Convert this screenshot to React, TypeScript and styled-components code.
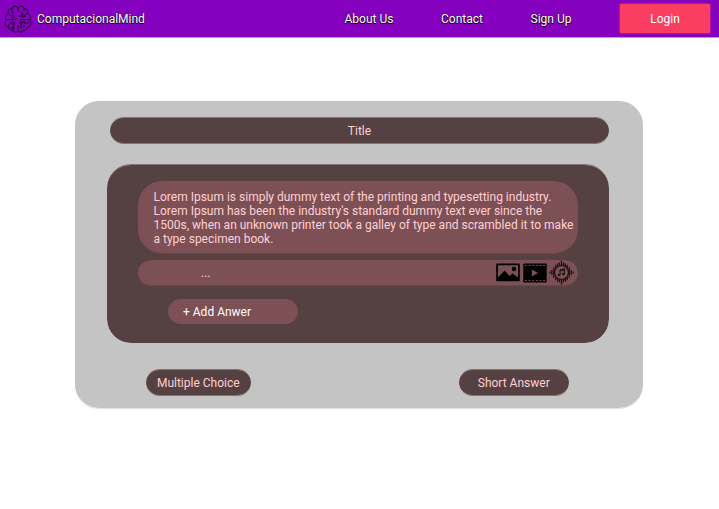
import React from "react";
import styled, { createGlobalStyle } from "styled-components";

const GlobalStyle = createGlobalStyle`
  * { box-sizing: border-box; }
  body {
    margin: 0;
    background: #ffffff;
    font-family: Roboto, "Liberation Sans", sans-serif;
    font-size: 12px;
    line-height: 14px;
    overflow: hidden;
  }
`;

const Header = styled.header`
  display: flex;
  align-items: center;
  height: 38px;
  padding: 0 9px 0 4px;
  border-bottom: 1px solid #c98fe2;
  background: #8500bf;
  color: #ffffff;
`;

const Brand = styled.a`
  display: flex;
  align-items: center;
  gap: 5px;
  width: 340.5px;
  text-shadow: 0 1px 1px #000, 0 0 1px #000;

  svg { width: 28px; height: 30px; }
`;

const Nav = styled.nav`
  display: flex;
  flex: 1;
`;

const NavLink = styled.a<{ $width: number }>`
  width: ${(p) => p.$width}px;
  white-space: nowrap;
  text-shadow: 0 1px 1px #000, 0 0 1px #000;
`;

const LoginButton = styled.button`
  width: 90px;
  height: 29px;
  padding: 0;
  border: 0;
  background: #f93e62;
  box-shadow: 0 0 2px #f93e62;
  color: #ffffff;
  font: inherit;
`;

const Card = styled.main`
  width: 568px;
  height: 308px;
  margin: 63px 0 0 75px;
  padding: 16px 34px 12px 32px;
  border-bottom: 1px solid #e1e1e1;
  border-radius: 24px;
  background: #c4c4c4;
  background-clip: padding-box;
`;

const TitleBar = styled.h1`
  height: 27px;
  margin: 0 0 20px 3px;
  border: solid #55404299;
  border-width: 1px 0;
  border-radius: 13.5px;
  background: #554042;
  background-clip: padding-box;
  color: #ffd0d5;
  font-size: 12px;
  font-weight: 400;
  line-height: 26px;
  text-align: center;
`;

const Panel = styled.section`
  height: 179px;
  padding: 16px 31px 19px 31px;
  border-top: 1px solid #55404299;
  border-radius: 24px;
  background: #554042;
  background-clip: padding-box;
`;

const Question = styled.p`
  height: 73px;
  margin: 0 0 6px;
  padding: 9px 0 0 15.5px;
  border-bottom: 1px solid #7c505480;
  border-radius: 24px;
  background: #7c5054;
  background-clip: padding-box;
  color: #ffd0d5;
  white-space: nowrap;
`;

const AnswerRow = styled.div`
  display: flex;
  align-items: center;
  justify-content: space-between;
  height: 26px;
  padding: 0 4px 0 63px;
  border-bottom: 1px solid #7c505480;
  border-radius: 13px;
  background: #7c5054;
  background-clip: padding-box;
  color: #ffd0d5;
`;

const MediaTools = styled.div`
  display: flex;
  align-items: center;

  svg { display: block; }
  svg:nth-child(2) { margin: 0 2px 0 3px; }
`;

const AddButton = styled.button`
  display: block;
  width: 130px;
  height: 25px;
  margin: 13px 0 0 30px;
  padding: 0 15px;
  border: 0;
  border-radius: 13px;
  background: #7c5054;
  color: #ffffff;
  font: inherit;
  text-align: left;
`;

const Choices = styled.footer`
  display: flex;
  justify-content: space-between;
  padding: 26px 40px 0 39px;
`;

const ChoiceButton = styled.button<{ $width: number }>`
  width: ${(p) => p.$width}px;
  height: 27px;
  padding: 0;
  border: solid #55404299;
  border-width: 1px 0;
  border-radius: 13.5px;
  background: #554042;
  background-clip: padding-box;
  color: #ffd0d5;
  font: inherit;
`;

const BrainIcon = () => (
  <svg viewBox="0 0 28 30" fill="none" stroke="#160020" strokeWidth="1">
    <path d="M14 4.500C13 1.500 8.500 1.500 8 4.500C5 4.500 3.500 7 4.500 9.500C1.500 11 .5 14 2.500 16C-.5 19 1.500 23 4.500 23C5 26 7.500 27 9 26.500C10.500 29 13.500 28.500 14 26" />
    <path d="M14 4.500C15 1.500 19.500 1.500 20 4.500C23 4.500 24.500 7 23.500 9.500C26.500 11 27.500 14 25.500 16C28.500 19 26.500 23 23.500 23C23 26 20.500 27 19 26.500C17.500 29 14.500 28.500 14 26V21M14 8V4.500" />
    <path d="M8 4.500V9M10 8.500l-2 1M4.500 9.500L6.500 12M2.500 15.500H11l2-1.500M10 18v4l-2 2M4.500 23v-2l2-2M17 20v5M20 4.500V7M18 8v4h-4M23.500 9.500L21 11M25.500 15.500H16M20 15.500V19h5M20 24v-3" />
    <g fill="#8500bf">
      <circle cx="9" cy="12.500" r="1.300" />
      <circle cx="8.500" cy="19" r="1.300" />
      <circle cx="9" cy="24" r="1.200" />
      <circle cx="19.500" cy="12" r="1.300" />
      <circle cx="17" cy="19" r="1.300" />
    </g>
  </svg>
);

const ImageIcon = () => (
  <svg width="24" height="19" viewBox="0 0 24 19">
    <path
      fillRule="evenodd"
      d="M1 .5h22q.8 0 .8.800v16.200q0 .8-.8.800H1q-.8 0-.8-.800V1.300Q.2.500 1 .500ZM2 14.500 8.500 7.500l5 5.500 3-2.500 5.500 4V2.300H2Z"
    />
    <circle cx="18" cy="6" r="2.200" />
  </svg>
);

const VideoIcon = () => (
  <svg width="24" height="20" viewBox="0 0 24 20">
    <rect x=".3" y=".5" width="23.400" height="19" rx=".8" />
    <path d="M2 2.500h20M2 17.500h20" stroke="#7c5054" strokeWidth="1" strokeDasharray="1.800 1.840" />
    <path d="M8.800 6.500v7L15 10Z" fill="#7c5054" />
  </svg>
);

const AudioIcon = () => (
  <svg width="25" height="25" viewBox="0 0 26 26" fill="none" stroke="#1b1011">
    <circle cx="13" cy="13" r="7.300" strokeWidth="1.200" />
    <path
      strokeWidth="1.300"
      d="M1 12v2M3 10.500v5M5 7.500v11M7 5V8.500M7 17.500V21M9 3.500v3.500M9 19v3.500M11 2.500V6M11 20v3.500M13 .5V5.500M13 20.500v5M15 2.500V6M15 20v3.500M17 3.500v3.500M17 19v3.500M19 5V8.500M19 17.500V21M21 7.500v11M23 10.500v5M25 12v2"
    />
    <path d="M11.500 15.500V10.300l4.500-1.200v5.300M11.500 11.500l4.500-1.200" />
    <g fill="#1b1011" stroke="none">
      <ellipse cx="10.500" cy="15.700" rx="1.500" ry="1.200" />
      <ellipse cx="15" cy="14.600" rx="1.500" ry="1.200" />
    </g>
  </svg>
);

export default function App() {
  return (
    <>
      <GlobalStyle />
      <Header>
        <Brand>
          <BrainIcon />
          ComputacionalMind
        </Brand>
        <Nav>
          <NavLink $width={96.5}>About Us</NavLink>
          <NavLink $width={89.5}>Contact</NavLink>
          <NavLink $width={60}>Sign Up</NavLink>
        </Nav>
        <LoginButton>Login</LoginButton>
      </Header>
      <Card>
        <TitleBar>Title</TitleBar>
        <Panel>
          <Question>
            Lorem Ipsum is simply dummy text of the printing and typesetting industry.
            <br />
            Lorem Ipsum has been the industry's standard dummy text ever since the
            <br />
            1500s, when an unknown printer took a galley of type and scrambled it to make
            <br />a type specimen book.
          </Question>
          <AnswerRow>
            <span>...</span>
            <MediaTools>
              <ImageIcon />
              <VideoIcon />
              <AudioIcon />
            </MediaTools>
          </AnswerRow>
          <AddButton>+ Add Anwer</AddButton>
        </Panel>
        <Choices>
          <ChoiceButton $width={104.5}>Multiple Choice</ChoiceButton>
          <ChoiceButton $width={110.5}>Short Answer</ChoiceButton>
        </Choices>
      </Card>
    </>
  );
}
